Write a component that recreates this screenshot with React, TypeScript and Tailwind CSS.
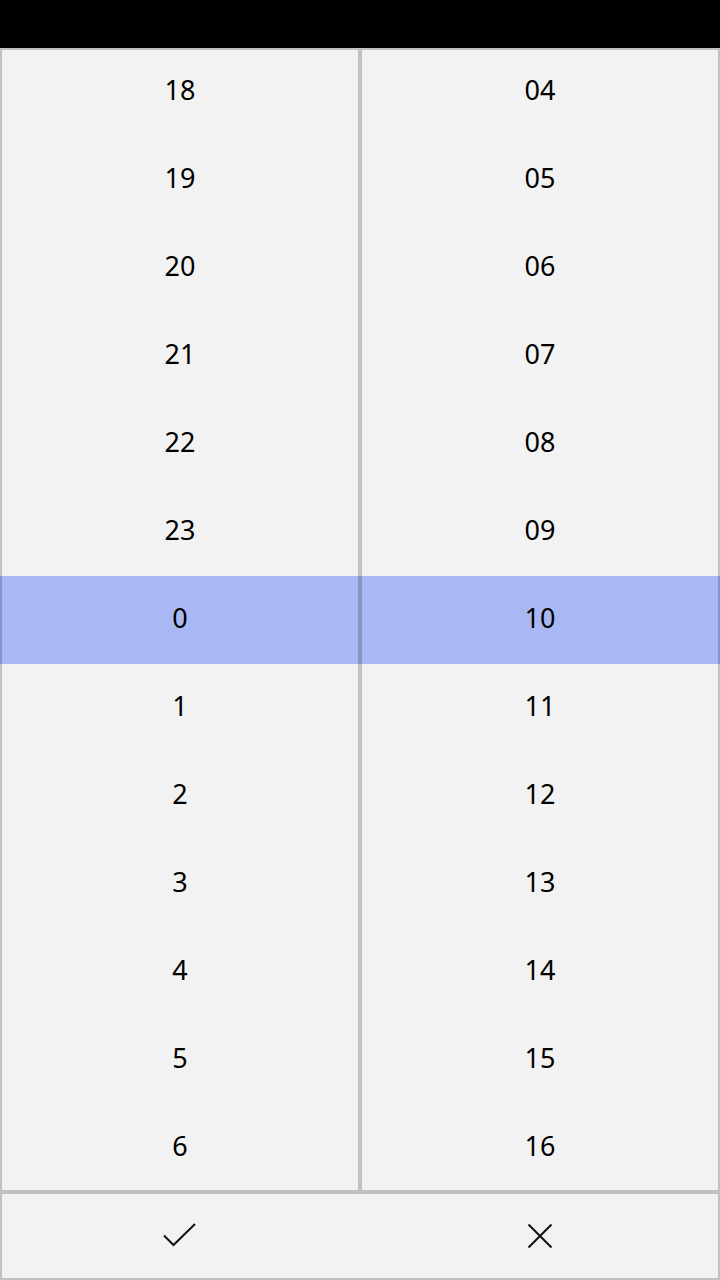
import { FC } from 'react';

const hours = ['18', '19', '20', '21', '22', '23', '0', '1', '2', '3', '4', '5', '6'];
const minutes = ['04', '05', '06', '07', '08', '09', '10', '11', '12', '13', '14', '15', '16'];
const SELECTED = 6;

const Column: FC<{ items: string[] }> = ({ items }) => (
  <div className="flex-1 flex flex-col overflow-hidden outline-2 -outline-offset-2 outline-black/20">
    {items.map((item, i) => (
      <div
        key={item}
        className={`h-[88px] shrink-0 flex items-center justify-center pb-[4px] text-[27px] text-black ${
          i === SELECTED ? 'bg-[#a9b8f5]' : ''
        }`}
      >
        {item}
      </div>
    ))}
  </div>
);

const App: FC = () => {
  return (
    <div className="w-[720px] h-[1280px] flex flex-col bg-black" style={{ fontFamily: '"Noto Sans", "Open Sans", sans-serif' }}>
      {/* status area */}
      <div className="h-[48px] shrink-0 bg-black" />

      {/* Picker */}
      <div className="h-[1144px] shrink-0 flex bg-[#f2f2f2]">
        <Column items={hours} />
        <Column items={minutes} />
      </div>

      {/* Actions */}
      <div className="h-[88px] shrink-0 flex bg-[#f2f2f2] outline-2 -outline-offset-2 outline-black/20">
        <button className="flex-1 flex items-center justify-center" title="Done">
          <svg width="34" height="26" viewBox="0 0 34 26" fill="none" stroke="#111" strokeWidth="2">
            <path d="M1 12.5 L10.5 22 L32 1" />
          </svg>
        </button>
        <button className="flex-1 flex items-center justify-center" title="Cancel">
          <svg width="26" height="26" viewBox="0 0 26 26" fill="none" stroke="#111" strokeWidth="2">
            <path d="M1.5 1.5 L24.5 24.5 M24.5 1.5 L1.5 24.5" />
          </svg>
        </button>
      </div>
    </div>
  );
};

export default App;
